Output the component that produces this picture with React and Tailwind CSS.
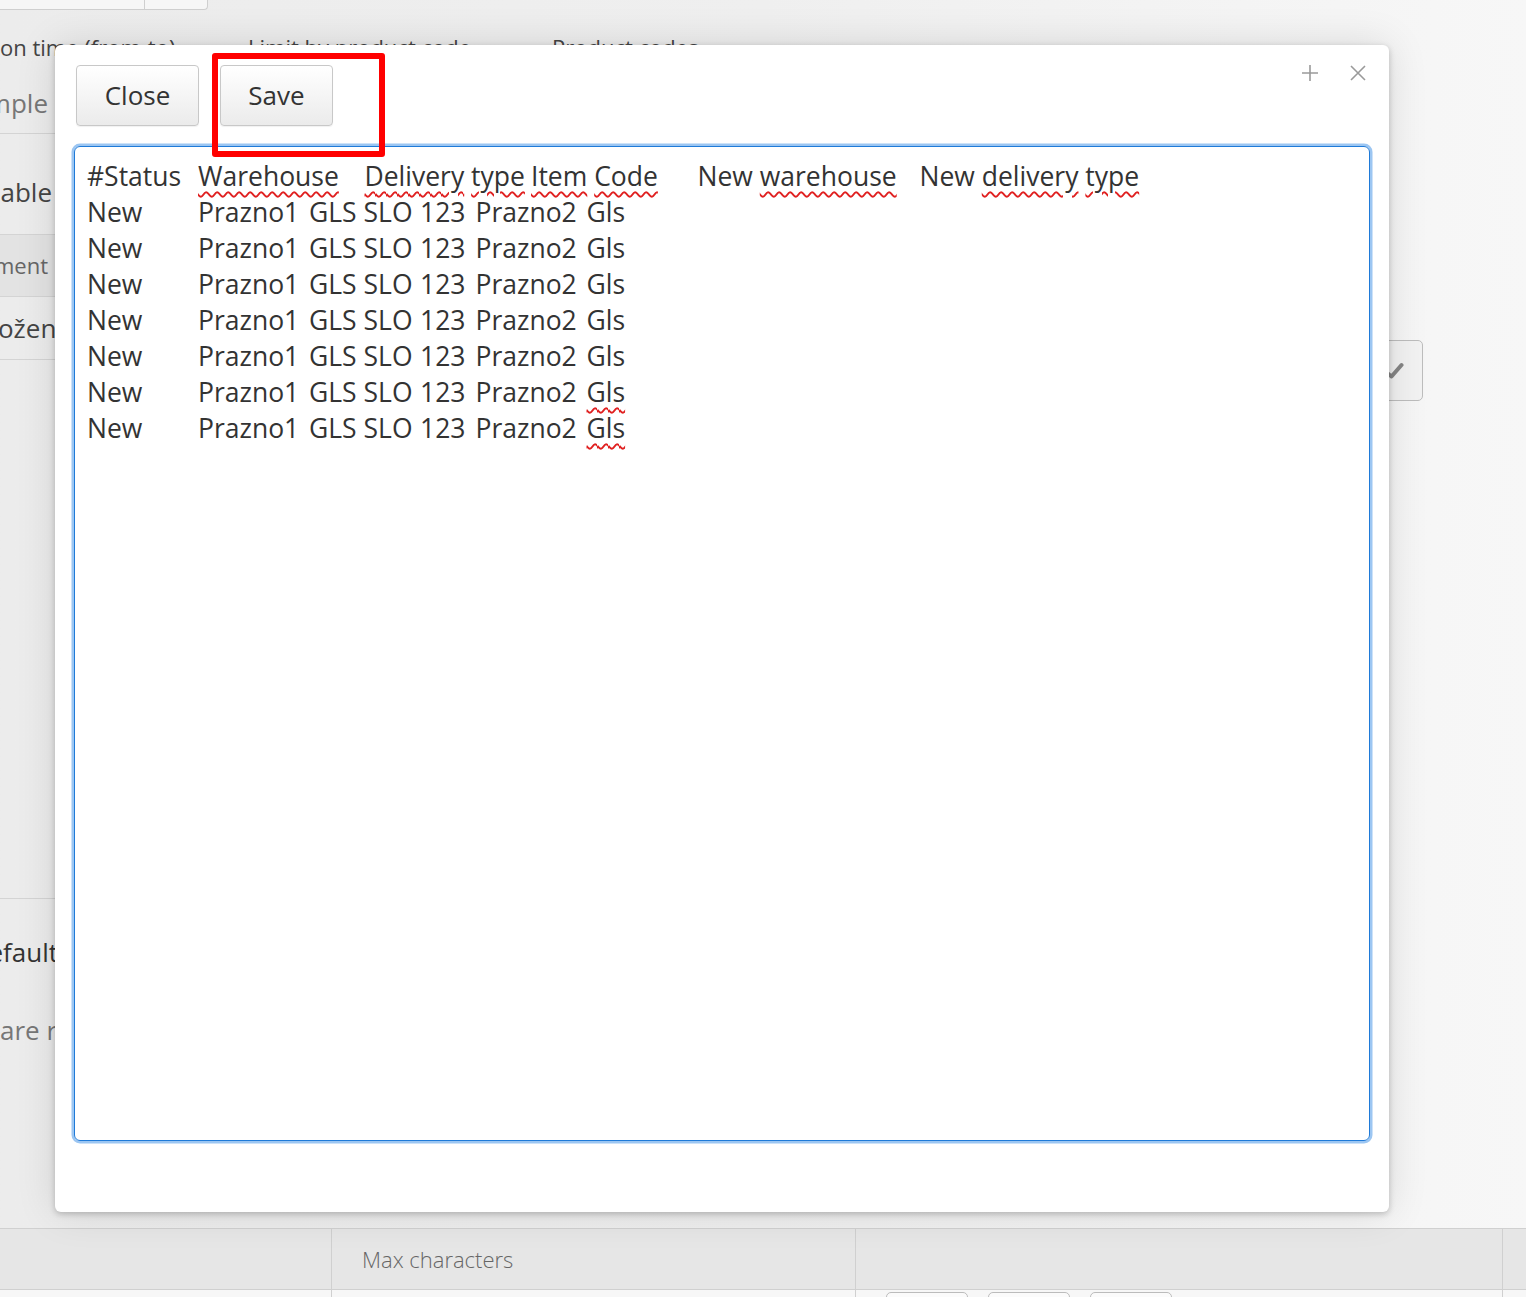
import React from 'react';

const rows = Array.from({ length: 7 }, (_, i) => i);

function Wavy({ children }) {
  return (
    <span className="underline decoration-wavy decoration-[#e02020] decoration-[1.5px] underline-offset-[5px]">
      {children}
    </span>
  );
}

function Btn({ label, w }) {
  return (
    <button
      className={`h-[61px] ${w} rounded-[4px] border border-[#c8c8c8] bg-gradient-to-b from-[#ffffff] to-[#ebebeb] text-[26px] text-[#333] shadow-[0_1px_1px_rgba(0,0,0,0.06)]`}
    >
      {label}
    </button>
  );
}

export default function App() {
  return (
    <div
      className="relative w-[1526px] h-[1297px] overflow-hidden bg-gradient-to-r from-[#ececec] via-[#efefef] to-[#f7f7f7] text-[#444]"
      style={{ fontFamily: '"Open Sans", "Liberation Sans", sans-serif' }}
    >
      {/* top strip of the page behind */}
      <div className="flex h-[10px] w-[208px] rounded-br-[4px] border-b border-r border-[#cfcfcf] bg-[#f6f6f6]">
        <div className="w-[145px] border-r border-[#cfcfcf]" />
      </div>

      {/* labels row */}
      <div className="mt-[22px] flex h-[30px] items-center whitespace-nowrap text-[22px] leading-[30px] text-[#444]">
        <span className="w-[248px]">on time (from-to)</span>
        <span className="w-[304px]">Limit by product code</span>
        <span>Product codes</span>
      </div>

      {/* middle area */}
      <div className="flex h-[1166px]">
        <div className="w-[55px] overflow-hidden">
          <div className="mt-[12px] flex h-[60px] items-center justify-end whitespace-nowrap border-b border-[#d4d4d4] pr-[7px] text-[26px] text-[#777]">
            Example
          </div>
          <div className="flex h-[101px] items-end justify-end whitespace-nowrap border-b border-[#d4d4d4] pb-[22px] pr-[3px] text-[26px] text-[#444]">
            Available
          </div>
          <div className="flex h-[62px] items-center justify-end whitespace-nowrap border-b border-[#d4d4d4] bg-[#e3e3e3] pr-[7px] text-[22px] text-[#666]">
            Shipment
          </div>
          <div className="flex h-[63px] items-center justify-end whitespace-nowrap border-b border-[#d4d4d4] text-[26px] text-[#444]">
            <span className="-mr-[17px]">Shranjevanje odloženo</span>
          </div>
          <div className="h-[539px] border-b border-[#d4d4d4]" />
          <div className="mt-[35px] flex h-[36px] items-center justify-end whitespace-nowrap text-[26px] text-[#333]">
            <span className="-mr-[3px]">Default</span>
          </div>
          <div className="mt-[42px] flex h-[36px] items-center justify-start whitespace-nowrap text-[26px] text-[#777]">
            are r
          </div>
        </div>
        <div className="flex-1" />
        <div className="w-[137px]">
          <div className="mt-[278px] -ml-[34px] flex h-[61px] w-[68px] items-center justify-end rounded-[5px] border border-[#bdbdbd] bg-[#f2f2f2] pr-[18px]">
            <svg width="20" height="18" viewBox="0 0 20 18">
              <path d="M2 10 L7.5 14.5 L17.5 3" fill="none" stroke="#858585" strokeWidth="4" strokeLinecap="round" strokeLinejoin="round" />
            </svg>
          </div>
        </div>
      </div>

      {/* table header behind */}
      <div className="flex h-[62px] border-y border-[#d0d0d0] bg-[#e6e6e6]">
        <div className="w-[332px] border-r border-[#d0d0d0]" />
        <div className="flex w-[524px] items-center border-r border-[#d0d0d0] pl-[30px] text-[22px] font-light text-[#666]">
          Max characters
        </div>
        <div className="w-[647px] border-r border-[#d0d0d0]" />
        <div className="flex-1" />
      </div>
      <div className="flex h-[20px] bg-[#f7f7f7]">
        <div className="w-[332px] border-r border-[#d0d0d0]" />
        <div className="w-[524px] border-r border-[#d0d0d0]" />
        <div className="flex w-[647px] gap-[20px] border-r border-[#d0d0d0] pl-[30px] pt-[2px]">
          <div className="h-[20px] w-[82px] rounded-t-[5px] border border-[#bcbcbc] bg-[#fbfbfb]" />
          <div className="h-[20px] w-[82px] rounded-t-[5px] border border-[#bcbcbc] bg-[#fbfbfb]" />
          <div className="h-[20px] w-[82px] rounded-t-[5px] border border-[#bcbcbc] bg-[#fbfbfb]" />
        </div>
      </div>

      {/* modal */}
      <div className="absolute left-[55px] top-[45px] flex h-[1167px] w-[1334px] flex-col rounded-[6px] bg-white px-[19px] pt-[20px] shadow-[0_2px_6px_rgba(0,0,0,0.22),0_0_40px_rgba(0,0,0,0.12)]">
        <div className="flex gap-[21px] pl-[2px]">
          <Btn label="Close" w="w-[123px]" />
          <Btn label="Save" w="w-[113px]" />
        </div>

        <div className="absolute right-[22px] top-[19px] flex items-center gap-[30px]">
          <svg width="18" height="18" viewBox="0 0 18 18">
            <path d="M9 1 V17 M1 9 H17" stroke="#9a9a9a" strokeWidth="1.6" />
          </svg>
          <svg width="18" height="18" viewBox="0 0 18 18">
            <path d="M2 2 L16 16 M16 2 L2 16" stroke="#9a9a9a" strokeWidth="1.6" />
          </svg>
        </div>

        <div className="mt-[20px] h-[995px] w-[1296px] rounded-[6px] border-[1.5px] border-[#1f7ad8] shadow-[0_0_0_2.5px_#9cc6f2] px-[12px] pt-[11px]">
          <div className="whitespace-pre text-[26.5px] leading-[36px] text-[#333] [tab-size:55.5px]">
            {'#Status\t'}
            <Wavy>Warehouse</Wavy>
            {'\t'}
            <Wavy>Delivery</Wavy> <Wavy>type</Wavy>
            {'\t'}
            <Wavy>Item</Wavy> <Wavy>Code</Wavy>
            {'\tNew '}
            <Wavy>warehouse</Wavy>
            {'\tNew '}
            <Wavy>delivery</Wavy> <Wavy>type</Wavy>
            {rows.map((i) => (
              <React.Fragment key={i}>
                {'\nNew\tPrazno1\tGLS SLO\t123\tPrazno2\t'}
                {i >= 5 ? <Wavy>Gls</Wavy> : 'Gls'}
              </React.Fragment>
            ))}
          </div>
        </div>
      </div>

      {/* annotation box */}
      <div className="absolute left-[212px] top-[53px] h-[104px] w-[173px] rounded-[3px] border-[6px] border-[#ff0000]" />
    </div>
  );
}
